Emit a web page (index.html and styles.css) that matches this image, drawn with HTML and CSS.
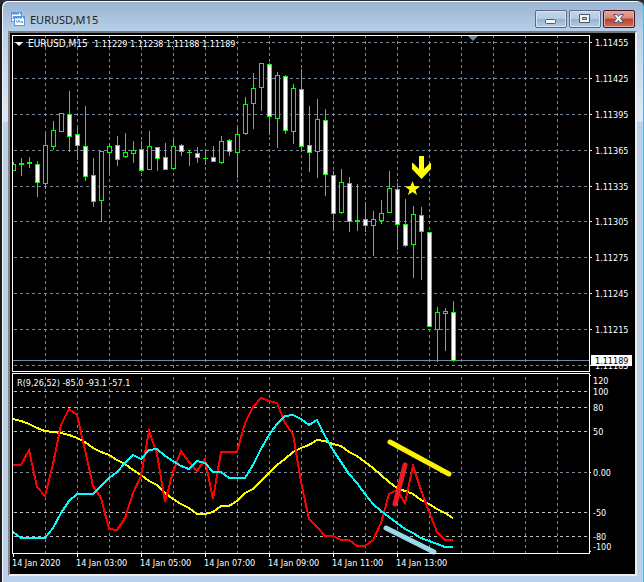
FILE: index.html
```html
<!DOCTYPE html>
<html lang="en">
<head>
  <meta charset="UTF-8">
  <title>EURUSD,M15</title>
  <meta name="viewport" content="width=device-width, initial-scale=1.0">
  <link rel="stylesheet" href="styles.css">
</head>
<body>

  <main class="window">
    <header class="titlebar">
      <svg class="app-icon" width="14" height="14" viewBox="0 0 14 14" aria-hidden="true">
        <rect x="0.5" y="0.5" width="10" height="9" fill="#fff" stroke="#5b97dc"/>
        <path d="M0 1.5h11" stroke="#5b97dc" stroke-width="2" stroke-dasharray="8 1"/>
        <path d="M2 7V5l1-1v3M5 5l1-1" fill="none" stroke="#5b97dc"/>
        <rect x="3.5" y="4.5" width="10" height="9" fill="#fff" stroke="#5b97dc"/>
        <path d="M3 5.5h11" stroke="#5b97dc" stroke-width="2" stroke-dasharray="8 1"/>
        <path d="M5 8l1.500 3L8 8l1.500 3L11 9l1 2" fill="none" stroke="#5b97dc"/>
      </svg>
      <h1 class="title">EURUSD,M15</h1>
      <div class="buttons">
        <button class="win-btn" type="button" aria-label="Minimize">
          <svg width="12" height="12" viewBox="0 0 12 12"><rect x="0.5" y="6.5" width="10" height="4" rx="1" fill="#f5f5f5" stroke="#50566b"/></svg>
        </button>
        <button class="win-btn" type="button" aria-label="Maximize">
          <svg width="12" height="12" viewBox="0 0 12 12"><path d="M0.5 1.5h10v8h-10zM3.5 4.5v2h4v-2z" fill="#f5f5f5" fill-rule="evenodd" stroke="#50566b"/></svg>
        </button>
        <button class="win-btn close" type="button" aria-label="Close">
          <svg width="12" height="12" viewBox="0 0 12 12"><path d="M0.5 1.5h3.500l1.500 2 1.500-2h3.500L7.500 5.500l3 4H7L5.500 7.500 4 9.500H0.500l3-4z" fill="#f5f5f5" stroke="#50566b"/></svg>
        </button>
      </div>
    </header>

    <section class="chart-frame">
      <svg class="chart" viewBox="10 33 625 541" role="img" aria-label="EURUSD M15 chart">
        <g id="grid" shape-rendering="crispEdges"></g>
        <path class="price-line" d="M13 360.5H589"/>
        <path class="marker" d="M468 36h10l-5 5z"/>
        <g id="candles" shape-rendering="crispEdges"></g>

        <polygon class="signal" points="419,156 424,156 424,169 430,163 431,163 431,169 421.5,179 412,169 412,163 413,163 419,169"/>
        <polygon class="signal" points="412.5,181 414.5,186 420,186.5 415.5,190 417,195 412.5,192 408,195 409.5,190 405,186.5 410.5,186"/>

        <g id="lines" shape-rendering="crispEdges"></g>
        <path class="trend yellow" d="M390 442L449 474"/>
        <path class="trend red" d="M405 465L395 504"/>
        <path class="trend blue" d="M386 528L434 552"/>

        <g class="frame" shape-rendering="crispEdges">
          <path d="M12.5 35.5H589.5V371.5H12.5z"/>
          <path d="M12.5 373.5H589.5V553.5H12.5z"/>
        </g>
        <g id="ticks" shape-rendering="crispEdges"></g>

        <path class="arrow" d="M15 42h8l-4 4z"/>
        <text class="symbol" x="28" y="47">EURUSD,M15</text>
        <g id="labels">
          <text x="94" y="47">1.11229</text>
          <text x="130" y="47">1.11238</text>
          <text x="166" y="47">1.11188</text>
          <text x="202" y="47">1.11189</text>
          <text x="17" y="386">R(9,26,52) -85.0 -93.1 -57.1</text>
        </g>
        <rect class="price-box" x="591" y="355" width="41" height="11"/>
        <text class="price" x="595" y="364">1.11189</text>
      </svg>
    </section>
  </main>

  <script src="chart.js"></script>
</body>
</html>
```

FILE: styles.css
```css
body {
  margin: 0;
  background: #2b2b33;
  font-family: "Noto Sans", "Open Sans", sans-serif;
}

.window {
  box-sizing: border-box;
  min-height: 100vh;
  padding: 0 6px 0 6px;
  border-top: 1px solid #2f2f38;
  border-left: 2px solid #1c1c20;
  border-right: 1px solid #35c3e6;
  border-radius: 7px 7px 0 0;
  background: linear-gradient(#99b4d1 0, #b9d1ea 32px, #dfe9f5 120px, #b9d1ea 121px);
  box-shadow: inset 1px 1px 0 #f4f8fc;
}

.titlebar {
  display: flex;
  align-items: center;
  height: 30px;
  padding: 0 2px 0 3px;
}

.app-icon {
  margin-top: 6px;
}

.title {
  flex: 1;
  margin: 7px 0 0 5px;
  font-size: 11px;
  line-height: 16px;
  font-weight: normal;
  color: #222;
}

.buttons {
  display: flex;
  gap: 2px;
  margin-top: 6px;
}

.win-btn {
  display: flex;
  align-items: center;
  justify-content: center;
  width: 32px;
  height: 18px;
  padding: 0;
  border: 1px solid #5b6b85;
  border-radius: 2px;
  background: linear-gradient(#c3d6ea 0, #b4cbe2 50%, #97b1cd 50%, #b5cee7 100%);
  box-shadow: inset 0 0 0 1px #d5e3f2;
}

.close {
  border-color: #4a1420;
  background: linear-gradient(#e5a69d 0, #d98779 45%, #b9402a 50%, #cf705c 100%);
  box-shadow: inset 0 0 0 1px #e4a79c;
}

.chart-frame {
  border-top: 2px solid #777;
  border-left: 2px solid #8a8582;
  border-right: 2px solid #f0eeec;
  border-bottom: 2px solid #f0eeec;
  background: black;
}

.chart {
  display: block;
  width: 100%;
}

.chart text {
  font-family: "DejaVu Sans Condensed", "Open Sans", sans-serif;
  font-size: 9px;
  fill: white;
}

.chart .symbol {
  font-size: 10px;
}

.chart .price {
  fill: black;
}

.price-box,
.arrow {
  fill: white;
}

.grid-line {
  fill: none;
  stroke: #778899;
  stroke-dasharray: 3 3;
}

.level {
  stroke: #c0c0c0;
}

.price-line {
  stroke: #778899;
}

.marker {
  fill: #778899;
}

.wick {
  stroke: #00ff00;
}

.candle {
  fill: black;
  stroke: #00ff00;
}

.down {
  fill: white;
}

.signal {
  fill: yellow;
}

.indicator {
  fill: none;
  stroke-width: 2;
}

.fast {
  stroke: red;
}

.middle {
  stroke: cyan;
}

.slow {
  stroke: yellow;
}

.trend {
  fill: none;
  stroke-width: 5;
  stroke-linecap: round;
}

.yellow {
  stroke: #fff200;
}

.red {
  stroke: #ed1c24;
}

.blue {
  stroke: #99d9ea;
}

.frame,
.tick {
  fill: none;
  stroke: white;
}
```

FILE: chart.js
```javascript
const STEP = 8;
const FIRST = 13;

// high, body top, body bottom, low, 1 = closed down
const candles = [
  [162, 164, 171, 171, 0], [158, 163, 165, 176, 0], [157, 162, 164, 168, 0], [161, 164, 183, 197, 1],
  [133, 145, 184, 189, 0], [121, 130, 147, 150, 0], [113, 113, 132, 132, 0], [91, 114, 137, 152, 1],
  [127, 134, 146, 160, 1], [106, 146, 177, 181, 1], [158, 175, 202, 207, 1], [151, 151, 201, 222, 0],
  [144, 146, 153, 174, 0], [136, 145, 160, 166, 1], [133, 152, 157, 158, 0], [141, 150, 154, 163, 0],
  [141, 149, 171, 172, 1], [131, 146, 170, 170, 0], [147, 147, 159, 171, 1], [143, 157, 170, 170, 1],
  [139, 146, 169, 170, 0], [144, 145, 152, 156, 1], [150, 152, 153, 166, 0], [147, 153, 158, 163, 1],
  [150, 158, 159, 165, 0], [146, 157, 162, 162, 1], [136, 141, 163, 164, 0], [139, 140, 152, 156, 1],
  [127, 134, 153, 178, 0], [97, 104, 134, 135, 0], [73, 88, 104, 129, 0], [63, 63, 88, 111, 0],
  [63, 64, 117, 135, 1], [72, 75, 119, 148, 0], [75, 76, 131, 134, 1], [84, 88, 132, 144, 0],
  [69, 89, 147, 152, 1], [106, 145, 153, 172, 1], [99, 119, 152, 178, 0], [109, 120, 175, 196, 1],
  [171, 175, 214, 231, 1], [169, 182, 213, 214, 0], [177, 183, 222, 232, 1], [184, 220, 222, 231, 0],
  [202, 219, 226, 232, 1], [211, 219, 226, 256, 0], [200, 213, 221, 224, 0], [171, 188, 213, 213, 0],
  [183, 189, 225, 250, 1], [199, 224, 246, 247, 1], [206, 214, 245, 278, 0], [207, 215, 232, 280, 1],
  [232, 232, 327, 327, 1], [307, 312, 330, 362, 0], [308, 311, 314, 351, 0], [301, 312, 361, 362, 1]
];

const fast = [465, 465, 450, 487, 496, 464, 425, 409, 415, 450, 486, 498, 529, 530, 518, 493, 476, 431, 454,
  502, 472, 451, 462, 471, 459, 499, 452, 452, 452, 423, 407, 398, 401, 403, 423, 434, 482, 519, 527, 536,
  536, 540, 540, 546, 546, 540, 523, 494, 490, 503, 466, 490, 512, 532, 540, 540];

const middle = [532, 538, 538, 538, 538, 528, 513, 501, 494, 494, 494, 486, 478, 472, 463, 455, 459, 450, 449,
  456, 461, 466, 469, 461, 463, 472, 472, 478, 478, 478, 465, 449, 435, 424, 416, 415, 419, 425, 420, 436,
  450, 462, 474, 483, 494, 504, 511, 517, 523, 529, 533, 538, 541, 544, 547, 547];

const slow = [419, 421, 424, 428, 431, 432, 433, 435, 438, 442, 448, 452, 455, 460, 464, 470, 475, 481, 485,
  493, 499, 504, 508, 514, 514, 512, 506, 506, 501, 493, 489, 481, 473, 465, 459, 452, 448, 445, 440, 441,
  444, 446, 452, 456, 462, 468, 475, 482, 488, 491, 494, 500, 504, 509, 513, 518];

const prices = [[42, '1.11455'], [78, '1.11425'], [114, '1.11395'], [150, '1.11365'], [186, '1.11335'],
  [221, '1.11305'], [257, '1.11275'], [293, '1.11245'], [329, '1.11215'], [365, '1.11185']];

const levels = [[380, '120'], [391, '100'], [407, '80'], [431, '50'], [472, '0.00'], [512, '-50'],
  [536, '-80'], [546, '-100']];

const times = ['2020', '03:00', '05:00', '07:00', '09:00', '11:00', '13:00'];

function add(parent, tag, attrs, text) {
  const el = document.createElementNS('http://www.w3.org/2000/svg', tag);
  for (const name in attrs) {
    el.setAttribute(name, attrs[name]);
  }
  if (text) {
    el.textContent = text;
  }
  document.getElementById(parent).appendChild(el);
}

for (let x = 45; x < 589; x += 32) {
  add('grid', 'path', { class: 'grid-line', d: `M${x + 0.5} 35V371` });
  add('grid', 'path', { class: 'grid-line', d: `M${x + 0.5} 377V553` });
}

prices.forEach(([y, label]) => {
  add('grid', 'path', { class: 'grid-line', d: `M14 ${y + 0.5}H588` });
  add('ticks', 'path', { class: 'tick', d: `M590 ${y + 0.5}h2` });
  add('labels', 'text', { x: 595, y: y + 4 }, label);
});

levels.forEach(([y, label]) => {
  if (y !== 380 && y !== 546) {
    const name = y === 472 ? 'grid-line' : 'grid-line level';
    add('grid', 'path', { class: name, d: `M14 ${y + 0.5}H588` });
  }
  add('labels', 'text', { x: 593, y: y + 4 }, label);
});

[375, 472, 551].forEach(y => add('ticks', 'path', { class: 'tick', d: `M590 ${y + 0.5}h1` }));

times.forEach((time, i) => {
  const x = FIRST + i * 64;
  add('ticks', 'path', { class: 'tick', d: `M${x + 0.5} 554v3` });
  add('labels', 'text', { x: x - 1, y: 566 }, '14 Jan ' + time);
});

candles.forEach(([high, top, bottom, low, down], i) => {
  const x = FIRST + i * STEP;
  const left = Math.max(x - 2, 12);
  add('candles', 'path', { class: 'wick', d: `M${x + 0.5} ${high}V${low}` });
  if (bottom - top < 2) {
    add('candles', 'path', { class: 'wick', d: `M${left} ${top + 0.5}H${x + 3}` });
    return;
  }
  add('candles', 'rect', {
    class: down ? 'candle down' : 'candle',
    x: left + 0.5,
    y: top + 0.5,
    width: x + 2 - left,
    height: bottom - top - 1
  });
});

[['slow', slow], ['fast', fast], ['middle', middle]].forEach(([name, values]) => {
  const points = values.map((y, i) => `${FIRST + i * STEP},${y}`).join(' ');
  add('lines', 'polyline', { class: 'indicator ' + name, points: points });
});
```
